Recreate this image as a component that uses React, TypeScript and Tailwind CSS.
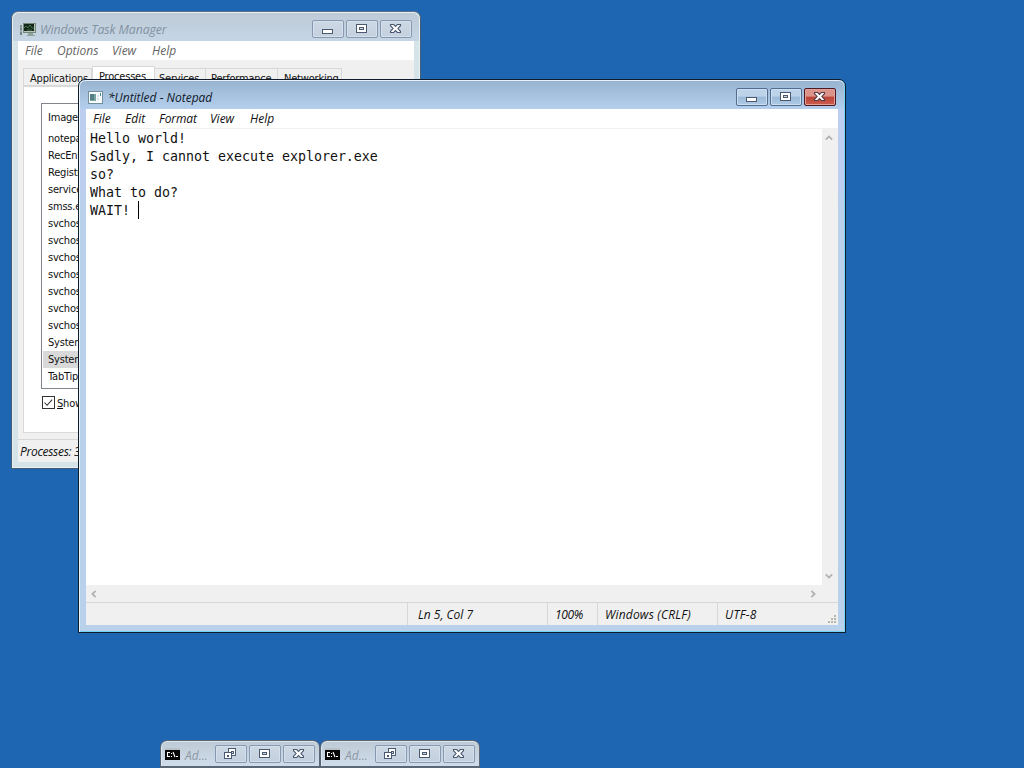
import React from "react";

const ui = "font-['Open_Sans','Noto_Sans',sans-serif] italic whitespace-pre leading-none";
const tahoma = "font-['DejaVu_Sans_Condensed','DejaVu_Sans',sans-serif] [font-stretch:condensed] whitespace-pre leading-none tracking-[-0.2px]";

type Glyph = "min" | "max" | "close" | "restore";

function CaptionGlyph({ kind, stroke }: { kind: Glyph; stroke: string }) {
  return (
    <svg width="14" height="14" viewBox="0 0 14 14" shapeRendering={kind === "close" ? "auto" : "crispEdges"} className="block">
      {kind === "min" && <rect x="1.5" y="7.5" width="10" height="4" rx="1" fill="#fff" stroke={stroke} />}
      {kind === "max" && (
        <>
          <rect x="1.5" y="2.5" width="10" height="8" fill="#fff" stroke={stroke} />
          <rect x="4.5" y="5.5" width="4" height="2" fill="#cfdce8" stroke={stroke} />
        </>
      )}
      {kind === "restore" && (
        <>
          <rect x="4.5" y="1.5" width="7" height="7" fill="#fff" stroke={stroke} />
          <rect x="7.5" y="4.5" width="2" height="2" fill="#cfdce8" stroke={stroke} />
          <rect x="0.5" y="5.5" width="7" height="6" fill="#fff" stroke={stroke} />
          <rect x="3.5" y="8.5" width="1" height="1" fill="#cfdce8" stroke={stroke} />
        </>
      )}
      {kind === "close" && (
        <path d="M1.5 2.5h3.2L6.5 4.4l1.8-1.9h3.2v1.2L8.9 6.5l2.6 2.8v1.2H8.3L6.5 8.6l-1.8 1.9H1.5V9.3l2.6-2.8-2.6-2.8z" fill="#fff" stroke={stroke} strokeWidth="1.1" />
      )}
    </svg>
  );
}

function CaptionButton({ kind, look }: { kind: Glyph; look: "idle" | "blue" | "red" }) {
  const looks = {
    idle: "border-[#8798b3] bg-linear-to-b from-[#ccd8e3] to-[#c4d0df] shadow-[inset_0_0_0_1px_#d5e0ea]",
    blue: "border-[#536d91] bg-linear-to-b from-[#bdd3ea] from-45% via-[#9bb9d8] via-50% to-[#afcae5] shadow-[inset_0_0_0_1px_#cbdff1]",
    red: "border-[#4f1822] bg-linear-to-b from-[#dc9389] from-45% via-[#b94238] via-50% to-[#cd5e4f] shadow-[inset_0_0_0_1px_#dea097]",
  };
  return (
    <div className={`flex h-[18px] w-8 items-center justify-center rounded-[2px] border ${looks[look]}`}>
      <CaptionGlyph kind={kind} stroke={look === "red" ? "#573b48" : "#4a5870"} />
    </div>
  );
}

const menuIdle = [
  ["File", "w-8"],
  ["Options", "w-[55px]"],
  ["View", "w-10"],
  ["Help", "w-10"],
];
const processes = ["notepad.exe", "RecEnv.exe", "Registry", "services.exe", "smss.exe", "svchost.exe", "svchost.exe", "svchost.exe", "svchost.exe", "svchost.exe", "svchost.exe", "svchost.exe", "System", "System Idle", "TabTip.exe"];

function TaskManager() {
  return (
    <div className="absolute left-[11px] top-[11px] flex h-[458px] w-[410px] flex-col overflow-hidden rounded-t-[7px] border border-[#465c74] border-t-[#59728b] bg-[#d5e4e9] px-[6px] shadow-[inset_0_0_0_1px_#e8f0f2]">
      <div className="-mx-[5px] mt-px flex h-[28px] shrink-0 rounded-t-[6px] bg-linear-to-b from-[#bdcbd7] to-[#c6d5e5] pl-[7px] pr-[7px] pt-[7px]">
        <svg width="18" height="16" viewBox="0 0 18 16" className="mt-[2px] block">
          <path d="M0 4h2v9H0z" fill="#9ca9a4" /><path d="M0 4h2M0 7h2M1 10v3" stroke="#4e6159" />
          <rect x="3.5" y="1.5" width="12" height="9" fill="#bac5b9" stroke="#76867a" />
          <rect x="4" y="2" width="10" height="7" fill="#15251b" />
          <path d="M4 6l2-2 2 2 2-3 2 3h2M7 8h5" fill="none" stroke="#4c8a50" strokeWidth=".8" />
          <path d="M8 11h5v2h2v1H7v-1h1z" fill="#91a19c" />
        </svg>
        <span className={`${ui} ml-[2px] mt-[4px] text-[12.3px] tracking-[-0.08px] text-[#8292a1]`}>Windows Task Manager</span>
        <div className="ml-auto flex gap-[2px]">
          <CaptionButton kind="min" look="idle" /><CaptionButton kind="max" look="idle" /><CaptionButton kind="close" look="idle" />
        </div>
      </div>
      <div className={`${ui} flex h-[19px] shrink-0 bg-white pl-[7px] pt-1 text-[12px] text-[#656565]`}>
        {menuIdle.map(([m, w]) => <span key={m} className={w}>{m}</span>)}
      </div>
      <div className="flex h-[402px] shrink-0 flex-col bg-[#f0f0f0] px-[5px] pt-[6px]">
        <div className={`${tahoma} flex h-5 shrink-0 items-end text-[11px] text-[#101010]`}>
          <div className="h-[18px] w-[69px] border border-[#d8d8d8] pl-[6px] pt-[4px]">Applications</div>
          <div className="h-5 w-[63px] border border-b-0 border-[#d8d8d8] bg-white pl-[6px] pt-[4px]">Processes</div>
          <div className="h-[18px] w-[51px] border border-l-0 border-[#d8d8d8] pl-[4px] pt-[4px]">Services</div>
          <div className="h-[18px] w-[72px] border border-l-0 border-[#d8d8d8] pl-[5px] pt-[4px]">Performance</div>
          <div className="h-[18px] w-[64px] border border-l-0 border-[#d8d8d8] pl-[6px] pt-[4px]">Networking</div>
        </div>
        <div className="flex h-[347px] shrink-0 flex-col border border-[#dadada] bg-white pl-[17px] pt-4">
          <div className={`${tahoma} h-[286px] w-[330px] border border-[#7f858b] pl-px text-[11px] text-[#111]`}>
            <div className="h-[26px] pl-[5px] pt-[8px]">Image Name</div>
            {processes.map((p, i) => (
              <div key={i} className={`h-[17px] overflow-hidden pl-[5px] pt-[3px] ${i === 13 ? "bg-[#d9d9d9]" : ""}`}>{p}</div>
            ))}
          </div>
          <div className={`${tahoma} ml-px mt-[7px] flex text-[11px] text-[#111]`}>
            <svg width="13" height="13" viewBox="0 0 13 13" className="block"><rect x=".5" y=".5" width="12" height="12" fill="#fff" stroke="#333" /><path d="M2.5 6.5l2.6 2.8 5-5.7" fill="none" stroke="#333" strokeWidth="1.1" /></svg>
            <span className="ml-[2px] mt-[2px]"><u className="underline-offset-1">S</u>how processes from all users</span>
          </div>
        </div>
        <div className={`${ui} -mx-[5px] mt-[6px] h-[23px] shrink-0 border-t border-[#d7d7d7] pl-[2px] pt-[6px] text-[12px] tracking-[-0.3px] text-[#111]`}>Processes: 31</div>
      </div>
    </div>
  );
}

function Chevron({ turn }: { turn: string }) {
  return (
    <svg width="8" height="8" viewBox="0 0 8 8" className={`block ${turn}`}><path d="M.8 5.6L4 2.4l3.2 3.2" fill="none" stroke="#b1b1b1" strokeWidth="1.8" /></svg>
  );
}

function Notepad() {
  return (
    <div className="absolute left-[78px] top-[79px] flex h-[554px] w-[768px] flex-col overflow-hidden rounded-t-[7px] border border-[#101c2b] bg-linear-to-b from-[#bdcff0] from-20% to-[#b9d1ea] to-23% px-[7px] shadow-[inset_1px_0_#e8f4fb,inset_-1px_0_#73d7f5,inset_0_-1px_#71d2f5]">
      <div className="-mx-[6px] flex h-[29px] shrink-0 rounded-t-[6px] border-t border-[#e5f0fa] bg-linear-to-b from-[#98b4d0] to-[#b3cfed] pl-[8px] pr-2 pt-[7px]">
        <svg width="16" height="14" viewBox="0 0 16 14" className="mt-[3px] block">
          <rect x=".5" y=".5" width="14" height="12" fill="#f7fbfb" stroke="#728f9e" />
          <rect x="2" y="3" width="6" height="7" fill="#79a6a2" /><path d="M2 3h4v6H2z" fill="#527f87" />
          <path d="M9 5h2M9 8h2" stroke="#b6c8cb" /><path d="M12.5 2v3" stroke="#438e9e" />
        </svg>
        <span className={`${ui} ml-[4px] mt-[4px] text-[12px] text-[#101828]`}>*Untitled - Notepad</span>
        <div className="ml-auto flex gap-[2px]">
          <CaptionButton kind="min" look="blue" /><CaptionButton kind="max" look="blue" /><CaptionButton kind="close" look="red" />
        </div>
      </div>
      <div className={`${ui} flex h-[19px] shrink-0 bg-white pl-[7px] pt-[4px] text-[12px] text-[#111]`}>
        <span className="w-8">File</span><span className="w-[34px]">Edit</span><span className="w-[51px] tracking-[-0.1px]">Format</span><span className="w-10">View</span><span>Help</span>
      </div>
      <div className="flex h-[457px] shrink-0 bg-[#f0f0f0]">
        <div className="flex-1 whitespace-pre border-t border-[#f0f0f0] bg-white pl-[4px] pt-px font-['DejaVu_Sans_Mono',monospace] text-[13.29px] leading-[18px] text-[#111]">
          <div>Hello world!</div><div>Sadly, I cannot execute explorer.exe</div><div>so?</div><div>What to do?</div>
          <div className="flex">{"WAIT! "}<span className="-mt-px h-[18px] w-px bg-black" /></div>
        </div>
        <div className="flex w-4 flex-col items-center justify-between pb-[5px] pr-[2px] pt-[6px]"><Chevron turn="" /><Chevron turn="rotate-180" /></div>
      </div>
      <div className="flex h-[17px] shrink-0 items-center justify-between bg-[#f0f0f0] pl-[4px] pr-[21px]"><Chevron turn="-rotate-90" /><Chevron turn="rotate-90" /></div>
      <div className={`${ui} flex h-[23px] shrink-0 border-t border-[#d7d7d7] bg-[#f0f0f0] text-[12px] text-[#111]`}>
        <div className="w-[322px] border-r border-[#d7d7d7]" />
        <div className="w-[140px] border-r border-[#d7d7d7] pl-[10px] pt-[6px]">Ln 5, Col 7</div>
        <div className="w-[50px] border-r border-[#d7d7d7] pl-[7px] pt-[6px] tracking-[-0.4px]">100%</div>
        <div className="w-[120px] border-r border-[#d7d7d7] pl-[7px] pt-[6px] tracking-[0.2px]">Windows (CRLF)</div>
        <div className="flex-1 pl-[7px] pt-[6px] tracking-[0.3px]">UTF-8</div>
        <svg width="10" height="10" viewBox="0 0 10 10" className="mb-px mr-px block self-end" fill="#b6b6aa"><path d="M7 1h2v2H7zM4 4h2v2H4zM7 4h2v2H7zM1 7h2v2H1zM4 7h2v2H4zM7 7h2v2H7z" /></svg>
      </div>
    </div>
  );
}

function Minimized({ place }: { place: string }) {
  return (
    <div className={`absolute top-[740px] flex h-[28px] w-[160px] rounded-t-[7px] border border-b-2 border-[#5b6677] bg-linear-to-b from-[#becbd7] to-[#cfdce9] pl-1 pt-[4px] shadow-[inset_0_1px_#dce7ef,inset_1px_0_#dce7ef] ${place}`}>
      <svg width="15" height="12" viewBox="0 0 15 12" className="mt-[3px] block">
        <rect width="15" height="12" fill="#050505" /><path d="M0 0h15v2H0z" fill="#b9c1c8" />
        <path d="M5 4.5H2.5v4H5M6.5 5v1M6.5 8v1M8 4l2 5M11 8.5h2" fill="none" stroke="#fff" strokeWidth="1.1" />
      </svg>
      <span className={`${ui} ml-[5px] mt-[5px] w-[30px] text-[12px] text-[#8c98a5]`}>Ad...</span>
      <div className="flex gap-[2px]"><CaptionButton kind="restore" look="idle" /><CaptionButton kind="max" look="idle" /><CaptionButton kind="close" look="idle" /></div>
    </div>
  );
}

export default function App() {
  return (
    <main className="relative h-screen w-screen overflow-hidden bg-[#1e66b2]">
      <TaskManager />
      <Notepad />
      <Minimized place="left-[160px]" />
      <Minimized place="left-[320px]" />
    </main>
  );
}
